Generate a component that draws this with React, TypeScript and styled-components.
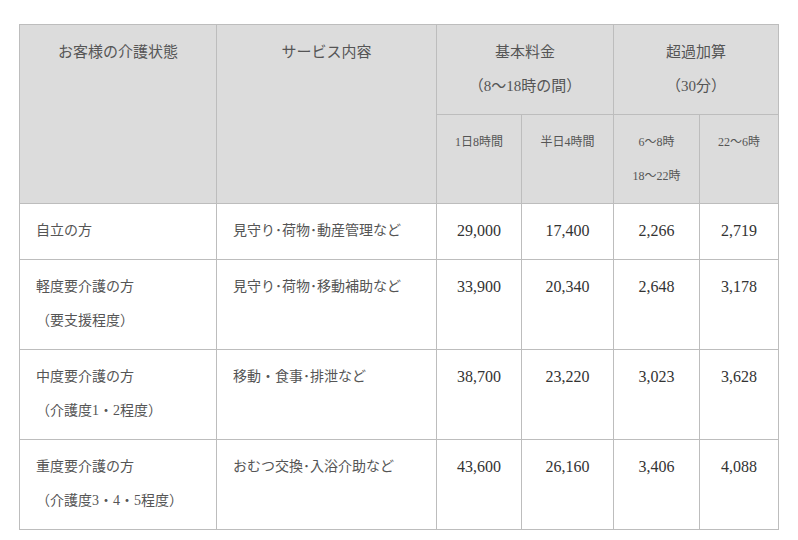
import React from 'react'
import styled, { createGlobalStyle } from 'styled-components'

const GlobalStyle = createGlobalStyle`
    html, body {
        margin: 0;
        background: #fff;
    }
    body {
        font-family: "Liberation Serif", "Noto Sans CJK JP", serif;
    }
`
const Wrapper = styled.div`
    padding: 24px 20px 10px 19px;
`
const Table = styled.table`
    width: 759px;
    table-layout: fixed;
    border-collapse: collapse;
    border: 1px solid #bdbdbd;
`
const Th = styled.th<{ small?: boolean }>`
    background-color: #dcdcdc;
    border: 1px solid #bdbdbd;
    color: #555;
    font-weight: normal;
    font-size: ${p => p.small ? '12px' : '15px'};
    line-height: 34px;
    text-align: center;
    vertical-align: top;
    padding: 10px 4px ${p => p.small ? '10px' : '11px'};
`
const Td = styled.td<{ num?: boolean }>`
    border: 1px solid #bdbdbd;
    color: ${p => p.num ? '#333' : '#555'};
    font-size: ${p => p.num ? '16px' : '14px'};
    line-height: 34px;
    text-align: ${p => p.num ? 'center' : 'left'};
    vertical-align: top;
    padding: 10px ${p => p.num ? '4px' : '16px'} 11px;
    white-space: nowrap;
`

interface IRow {
    state: string[]
    service: string
    prices: string[]
}

const rows: IRow[] = [
    { state: ['自立の方'], service: '見守り･荷物･動産管理など', prices: ['29,000', '17,400', '2,266', '2,719'] },
    { state: ['軽度要介護の方', '（要支援程度）'], service: '見守り･荷物･移動補助など', prices: ['33,900', '20,340', '2,648', '3,178'] },
    { state: ['中度要介護の方', '（介護度1・2程度）'], service: '移動・食事･排泄など', prices: ['38,700', '23,220', '3,023', '3,628'] },
    { state: ['重度要介護の方', '（介護度3・4・5程度）'], service: 'おむつ交換･入浴介助など', prices: ['43,600', '26,160', '3,406', '4,088'] },
]

const Lines: React.FC<{ lines: string[] }> = ({ lines }) => (
    <>
        {lines.map((line, i) => (
            <React.Fragment key={i}>
                {i > 0 && <br />}
                {line}
            </React.Fragment>
        ))}
    </>
)

const App: React.FC = () => {
    return (
        <Wrapper>
            <GlobalStyle />
            <Table>
                <colgroup>
                    <col style={{ width: 197 }} />
                    <col style={{ width: 220 }} />
                    <col style={{ width: 85 }} />
                    <col style={{ width: 92 }} />
                    <col style={{ width: 86 }} />
                    <col style={{ width: 79 }} />
                </colgroup>
                <thead>
                    <tr>
                        <Th rowSpan={2}>お客様の介護状態</Th>
                        <Th rowSpan={2}>サービス内容</Th>
                        <Th colSpan={2}><Lines lines={['基本料金', '（8〜18時の間）']} /></Th>
                        <Th colSpan={2}><Lines lines={['超過加算', '（30分）']} /></Th>
                    </tr>
                    <tr>
                        <Th small>1日8時間</Th>
                        <Th small>半日4時間</Th>
                        <Th small><Lines lines={['6〜8時', '18〜22時']} /></Th>
                        <Th small>22〜6時</Th>
                    </tr>
                </thead>
                <tbody>
                    {rows.map(row => (
                        <tr key={row.service}>
                            <Td><Lines lines={row.state} /></Td>
                            <Td>{row.service}</Td>
                            {row.prices.map((price, i) => (
                                <Td num key={i}>{price}</Td>
                            ))}
                        </tr>
                    ))}
                </tbody>
            </Table>
        </Wrapper>
    )
}

export default App
